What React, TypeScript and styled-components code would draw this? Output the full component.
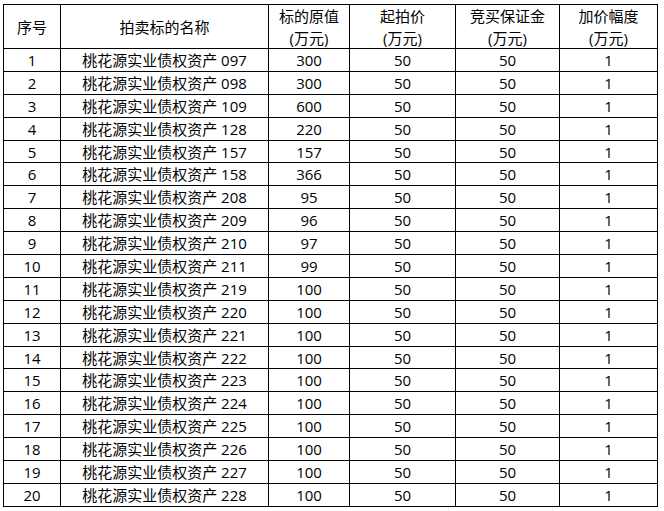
import React from "react";
import styled, { createGlobalStyle } from "styled-components";

const GlobalStyle = createGlobalStyle`
  html, body { margin: 0; padding: 0; background: #ffffff; }
  body { font-family: "Open Sans", "Noto Sans CJK SC", sans-serif; }
  *, *::before, *::after { box-sizing: border-box; }
`;

const Page = styled.div`
  padding: 4px 0 0 3px;
  width: 664px;
  height: 511px;
  background: #ffffff;
`;

const Table = styled.div`
  display: grid;
  grid-template-columns: 57px 208px 81px 106px 104px 98px;
  grid-template-rows: 44px;
  grid-auto-rows: 22.9px;
  width: 655px;
  border-left: 1px solid #000;
  border-top: 1px solid #000;
  font-family: "Open Sans", "Noto Sans CJK SC", sans-serif;
  font-size: 15px;
  color: #000;
`;

const Cell = styled.div<{ $head?: boolean }>`
  display: flex;
  align-items: center;
  justify-content: center;
  text-align: center;
  border-right: 1px solid #000;
  border-bottom: 1px solid #000;
  line-height: ${(p) => (p.$head ? "22px" : "22px")};
  white-space: nowrap;
  overflow: hidden;
`;

const HeadText = styled.span`
  display: block;
  line-height: 22px;
`;

const headers: React.ReactNode[] = [
  <HeadText key="a">序号</HeadText>,
  <HeadText key="b">拍卖标的名称</HeadText>,
  <HeadText key="c">
    标的原值
    <br />
    (万元)
  </HeadText>,
  <HeadText key="d">
    起拍价
    <br />
    (万元)
  </HeadText>,
  <HeadText key="e">
    竞买保证金
    <br />
    (万元)
  </HeadText>,
  <HeadText key="f">
    加价幅度
    <br />
    (万元)
  </HeadText>,
];

const rows: [string, number][] = [
  ["097", 300],
  ["098", 300],
  ["109", 600],
  ["128", 220],
  ["157", 157],
  ["158", 366],
  ["208", 95],
  ["209", 96],
  ["210", 97],
  ["211", 99],
  ["219", 100],
  ["220", 100],
  ["221", 100],
  ["222", 100],
  ["223", 100],
  ["224", 100],
  ["225", 100],
  ["226", 100],
  ["227", 100],
  ["228", 100],
];

export default function App() {
  return (
    <>
      <GlobalStyle />
      <Page>
        <Table>
          {headers.map((h, i) => (
            <Cell $head key={`h${i}`}>
              {h}
            </Cell>
          ))}
          {rows.map(([code, value], i) => (
            <React.Fragment key={code}>
              <Cell>{i + 1}</Cell>
              <Cell>桃花源实业债权资产 {code}</Cell>
              <Cell>{value}</Cell>
              <Cell>50</Cell>
              <Cell>50</Cell>
              <Cell>1</Cell>
            </React.Fragment>
          ))}
        </Table>
      </Page>
    </>
  );
}
